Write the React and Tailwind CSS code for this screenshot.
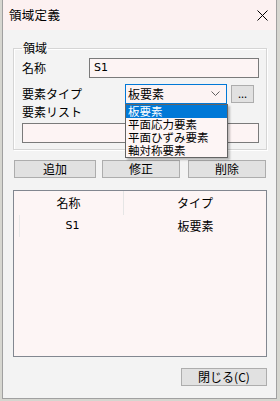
export default function App() {
  return (
    <div className="w-[280px] h-[401px] bg-[#d6d6d0] font-['Noto_Sans_CJK_JP',sans-serif] text-[12px] leading-[16px] text-black overflow-hidden">
      <div className="ml-[2px] w-[275px] h-[399px] bg-[#f3f3f3] border border-t-0 border-[#a0a0a0] flex flex-col">
        <div className="h-[30px] shrink-0 bg-[#fcf1f1] flex items-center justify-between pl-[6px] pr-[8px]">
          <span className="text-[12.5px] leading-[16px] tracking-[0.3px]">領域定義</span>
          <svg width="11" height="11" viewBox="0 0 11 11" className="mt-[1px]">
            <path d="M0.5 0.5 L10.5 10.5 M10.5 0.5 L0.5 10.5" stroke="#000" strokeWidth="1" fill="none" />
          </svg>
        </div>

        <fieldset className="ml-[10px] mt-[10px] w-[254px] border border-[#d5d5d5] shadow-[inset_1px_1px_0_#ffffff,1px_1px_0_#ffffff] px-[8px] pb-[6px] pr-[7px]">
          <legend className="px-[1px] leading-[16px]">領域</legend>
          <div className="pt-[2px] flex items-center h-[22px]">
            <span className="w-[67px]">名称</span>
            <div className="w-[170px] h-[20px] border border-[#7a7a7a] bg-[#fdf4f4] flex items-center pl-[4px] font-['DejaVu_Sans',sans-serif] text-[11px]">S1</div>
          </div>
          <div className="mt-[6px] flex items-center h-[20px]">
            <span className="w-[103px]">要素タイプ</span>
            <div className="relative w-[102px] h-[20px]">
              <div className="w-full h-full border border-[#0078d7] bg-[#fcf3f3] flex items-center justify-between pl-[2px] pr-[6px]">
                <span>板要素</span>
                <svg width="9" height="6" viewBox="0 0 9 6">
                  <path d="M0.5 0.5 L4.5 4.5 L8.5 0.5" stroke="#606060" strokeWidth="1" fill="none" />
                </svg>
              </div>
              <div className="absolute left-0 top-full w-[103px] border border-[#646464] bg-[#fdf5f5] shadow-[2px_2px_2px_rgba(0,0,0,0.25)] z-10 text-[11.5px] leading-[13px]">
                <div className="bg-[#0078d7] text-white pl-[2px] h-[13px]">板要素</div>
                <div className="pl-[2px] h-[13px]">平面応力要素</div>
                <div className="pl-[2px] h-[13px]">平面ひずみ要素</div>
                <div className="pl-[2px] h-[13px]">軸対称要素</div>
              </div>
            </div>
            <div className="ml-[4px] w-[23px] h-[18px] border border-[#adadad] bg-[#e1e1e1] flex items-center justify-center text-[11px] leading-[10px] pb-[2px]">...</div>
          </div>
          <div className="h-[16px] leading-[16px]">要素リスト</div>
          <div className="mt-[3px] w-[237px] h-[20px] border border-[#7a7a7a] bg-[#fdf4f4]"></div>
        </fieldset>

        <div className="ml-[11px] mt-[10px] flex h-[18px]">
          <div className="w-[82px] h-[18px] border border-[#adadad] bg-[#e1e1e1] flex items-center justify-center">追加</div>
          <div className="ml-[6px] w-[78px] h-[18px] border border-[#adadad] bg-[#e1e1e1] flex items-center justify-center">修正</div>
          <div className="ml-[8px] w-[78px] h-[18px] border border-[#adadad] bg-[#e1e1e1] flex items-center justify-center">削除</div>
        </div>

        <div className="ml-[10px] mt-[12px] w-[254px] h-[167px] border border-[#828790] bg-[#fdf5f5] flex flex-col">
          <div className="flex h-[24px] shrink-0">
            <div className="w-[110px] border-r border-[#e5e5e5] flex items-center justify-center">名称</div>
            <div className="flex-1 flex items-center justify-center">タイプ</div>
          </div>
          <div className="flex h-[22px] ml-[5px] border-l border-[#e8e8e8]">
            <div className="w-[105px] flex items-center justify-center font-['DejaVu_Sans',sans-serif] text-[11px]">S1</div>
            <div className="flex-1 flex items-center justify-center">板要素</div>
          </div>
        </div>

        <div className="mt-[11px] self-end mr-[9px] w-[86px] h-[18px] border border-[#adadad] bg-[#e1e1e1] flex items-center justify-center">閉じる(C)</div>
      </div>
    </div>
  );
}
